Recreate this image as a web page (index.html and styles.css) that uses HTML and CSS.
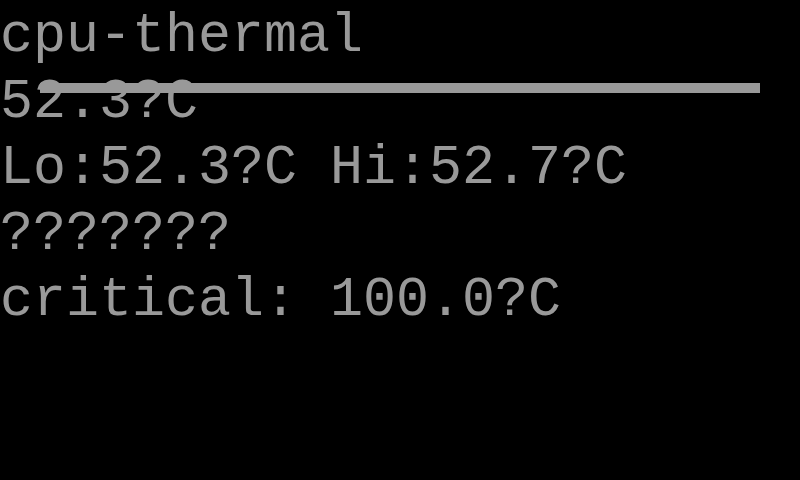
FILE: index.html
```html
<!DOCTYPE html>
<html>
<head>
<meta charset="utf-8">
<link rel="stylesheet" href="styles.css">
</head>
<body>
<div class="screen">
  <div class="line">cpu-thermal</div>
  <div class="line">52.3?C</div>
  <div class="line">Lo:52.3?C Hi:52.7?C</div>
  <div class="line">???????</div>
  <div class="line">critical: 100.0?C</div>
  <div class="bar"></div>
</div>
</body>
</html>
```
FILE: styles.css
```css
html, body {
  margin: 0;
  padding: 0;
  background: #000;
}
.screen {
  position: relative;
  width: 800px;
  height: 480px;
  overflow: hidden;
  background: #000;
  color: #999999;
  font-family: "Liberation Mono", "DejaVu Sans Mono", monospace;
  font-size: 55px;
  line-height: 66px;
  padding-top: 4px;
  box-sizing: border-box;
}
.line {
  white-space: pre;
  height: 66px;
}
.bar {
  position: absolute;
  left: 40px;
  top: 83px;
  width: 720px;
  height: 10px;
  background: #999999;
}
```
